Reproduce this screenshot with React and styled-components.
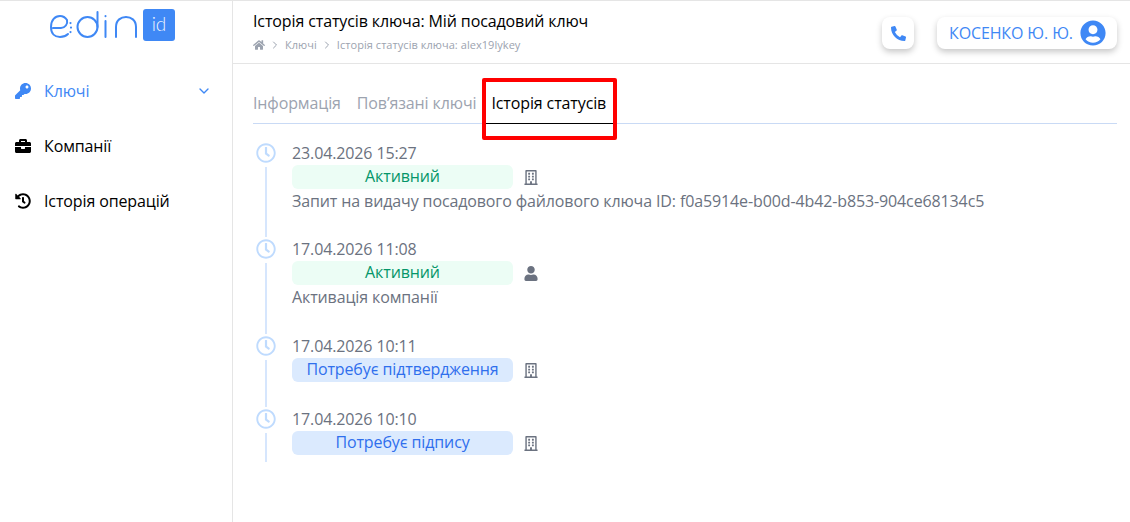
import styled, { createGlobalStyle } from "styled-components"
import {
  FaKey,
  FaBriefcase,
  FaHistory,
  FaHome,
  FaPhoneAlt,
  FaUserCircle,
  FaRegClock,
  FaRegBuilding,
  FaUser,
} from "react-icons/fa"
import { FiChevronDown, FiChevronRight } from "react-icons/fi"

const GlobalStyle = createGlobalStyle`
  html, body {
    margin: 0;
    padding: 0;
    background: #fff;
  }
  body {
    font-family: "Open Sans", "Noto Sans", sans-serif;
    font-size: 16px;
    letter-spacing: -0.12px;
    color: #000;
  }
  * {
    box-sizing: border-box;
  }
`

const Page = styled.div`
  position: relative;
  display: grid;
  grid-template-columns: 233px 1fr;
  width: 1130px;
  height: 522px;
  overflow: hidden;
  border-top: 1px solid #e5e5e5;
`

const Sidebar = styled.aside`
  border-right: 1px solid #e5e5e5;
  display: flex;
  flex-direction: column;
`

const LogoRow = styled.div`
  display: flex;
  align-items: flex-start;
  padding: 8px 0 0 50px;
  height: 62px;
`

const LogoBox = styled.div`
  width: 32px;
  height: 32px;
  border-radius: 3px;
  background: #3f88f5;
  color: #eef4fe;
  font-family: Lato, sans-serif;
  font-size: 19px;
  font-weight: 300;
  line-height: 30px;
  text-align: center;
`

const Nav = styled.nav`
  display: flex;
  flex-direction: column;
`

const NavItem = styled.div`
  display: flex;
  align-items: center;
  height: 55px;
  padding: 0 20px 0 15px;
  color: ${(p) => (p.$active ? "#3f88f5" : "#000")};
  font-size: 16px;

  span {
    flex: 1;
    margin-left: 13px;
  }
`

const NavIcon = styled.div`
  width: 16px;
  display: flex;
  justify-content: center;
  font-size: 16px;
  color: ${(p) => (p.$active ? "#3f88f5" : "#000")};
`

const Main = styled.main`
  display: flex;
  flex-direction: column;
`

const Header = styled.header`
  height: 63px;
  border-bottom: 1px solid #e5e5e5;
  display: flex;
  align-items: flex-start;
  justify-content: space-between;
  padding: 0 13px 0 20px;
`

const Heading = styled.div`
  padding-top: 9px;
`

const Title = styled.div`
  font-size: 16px;
  line-height: 22px;
`

const Crumbs = styled.div`
  display: flex;
  align-items: center;
  gap: 4px;
  margin-top: 5px;
  font-size: 11px;
  letter-spacing: 0.05px;
  line-height: 16px;
  color: #9ca3af;
`

const HeaderActions = styled.div`
  display: flex;
  gap: 23px;
  padding-top: 16px;
`

const Raised = styled.div`
  display: flex;
  align-items: center;
  height: 32px;
  border-radius: 8px;
  background: #fff;
  color: #3f88f5;
  box-shadow: 0 3px 6px rgba(0, 0, 0, 0.22);
`

const CallButton = styled(Raised)`
  width: 32px;
  justify-content: center;
  font-size: 15px;
`

const UserButton = styled(Raised)`
  width: 180px;
  padding: 0 11px 0 12px;
  justify-content: space-between;
  font-size: 16px;

  svg {
    font-size: 26px;
  }
`

const Content = styled.div`
  padding: 0 13px 0 20px;
`

const Tabs = styled.div`
  display: flex;
  gap: 16px;
  height: 60px;
  border-bottom: 1px solid #c9daf5;
`

const Tab = styled.div`
  height: 60px;
  padding-top: 27px;
  line-height: 24px;
  font-size: 16px;
  color: #9ca3af;
`

const ActiveTab = styled(Tab)`
  color: #000;
  margin-left: -9px;
  padding-left: 8px;
  padding-right: 8px;
  border-bottom: 1px solid #000;
`

const Timeline = styled.div`
  padding-top: 17px;
`

const Entry = styled.div`
  display: grid;
  grid-template-columns: 26px 1fr;
  column-gap: 13px;
  height: ${(p) => p.$height}px;
`

const Marker = styled.div`
  display: flex;
  flex-direction: column;
  align-items: center;
  font-size: 20px;
  color: #bfdbfe;

  &::after {
    content: "";
    width: 2px;
    flex: 1;
    margin-top: 4px;
    background: #d6e6fd;
  }
`

const ClockBox = styled.div`
  height: 20px;
  margin-top: 2px;
  line-height: 0;
`

const Body = styled.div`
  color: #6b7280;
  font-size: 16px;
  line-height: 24px;
`

const StatusRow = styled.div`
  display: flex;
  align-items: center;
  gap: 11px;
`

const Badge = styled.div`
  width: 221px;
  height: 24px;
  border-radius: 6px;
  line-height: 23px;
  text-align: center;
  background: ${(p) => (p.$kind === "ok" ? "#ecfdf5" : "#dbeafe")};
  color: ${(p) => (p.$kind === "ok" ? "#059669" : "#2f6fed")};
`

const Actor = styled.div`
  width: 14px;
  display: flex;
  justify-content: center;
  font-size: 15px;
  color: #6b7280;
`

const RedFrame = styled.div`
  position: absolute;
  left: 482px;
  top: 77px;
  width: 135px;
  height: 62px;
  border: 4px solid #f00;
  border-radius: 2px;
  pointer-events: none;
`

const entries = [
  {
    date: "23.04.2026 15:27",
    status: "Активний",
    kind: "ok",
    actor: "org",
    note: "Запит на видачу посадового файлового ключа ID: f0a5914e-b00d-4b42-b853-904ce68134c5",
    height: 96,
  },
  {
    date: "17.04.2026 11:08",
    status: "Активний",
    kind: "ok",
    actor: "user",
    note: "Активація компанії",
    height: 97,
  },
  {
    date: "17.04.2026 10:11",
    status: "Потребує підтвердження",
    kind: "pending",
    actor: "org",
    height: 73,
  },
  {
    date: "17.04.2026 10:10",
    status: "Потребує підпису",
    kind: "pending",
    actor: "org",
    height: 55,
  },
]

function EdinLogo() {
  return (
    <svg width="93" height="32" viewBox="0 0 93 32" fill="none" stroke="#3f88f5" strokeWidth="2" strokeLinecap="round">
      <path d="M3 19 H11 C15 19 18 15 17 11 C15 8 12 7 10 7 C5 7 1 11 1 18 C1 25 5 28 10 28 C13 28 16 27 18 25" />
      <path d="M20.5 14 v0.1 M21 18.5 v0.1 M20.5 23 v0.1" strokeWidth="2.2" />
      <circle cx="37.5" cy="18" r="10" />
      <path d="M47.5 3 V18" />
      <path d="M55.5 12 V28 M55.5 7 v0.3" />
      <path d="M66 28 V18 C66 11 71 8 76 8 C81 8 86 11 86 18 V28" />
    </svg>
  )
}

export default function App() {
  return (
    <>
      <GlobalStyle />
      <Page>
        <Sidebar>
          <LogoRow>
            <EdinLogo />
            <LogoBox>id</LogoBox>
          </LogoRow>
          <Nav>
            <NavItem $active>
              <NavIcon $active>
                <FaKey />
              </NavIcon>
              <span>Ключі</span>
              <FiChevronDown />
            </NavItem>
            <NavItem>
              <NavIcon>
                <FaBriefcase />
              </NavIcon>
              <span>Компанії</span>
            </NavItem>
            <NavItem>
              <NavIcon>
                <FaHistory />
              </NavIcon>
              <span>Історія операцій</span>
            </NavItem>
          </Nav>
        </Sidebar>
        <Main>
          <Header>
            <Heading>
              <Title>Історія статусів ключа: Мій посадовий ключ</Title>
              <Crumbs>
                <FaHome size={12} />
                <FiChevronRight size={12} />
                Ключі
                <FiChevronRight size={12} />
                Історія статусів ключа: alex19lykey
              </Crumbs>
            </Heading>
            <HeaderActions>
              <CallButton>
                <FaPhoneAlt />
              </CallButton>
              <UserButton>
                КОСЕНКО Ю. Ю.
                <FaUserCircle />
              </UserButton>
            </HeaderActions>
          </Header>
          <Content>
            <Tabs>
              <Tab>Інформація</Tab>
              <Tab>Пов’язані ключі</Tab>
              <ActiveTab>Історія статусів</ActiveTab>
            </Tabs>
            <Timeline>
              {entries.map((entry) => (
                <Entry key={entry.date} $height={entry.height}>
                  <Marker>
                    <ClockBox>
                      <FaRegClock />
                    </ClockBox>
                  </Marker>
                  <Body>
                    <div>{entry.date}</div>
                    <StatusRow>
                      <Badge $kind={entry.kind}>{entry.status}</Badge>
                      <Actor>{entry.actor === "org" ? <FaRegBuilding /> : <FaUser />}</Actor>
                    </StatusRow>
                    {entry.note && <div>{entry.note}</div>}
                  </Body>
                </Entry>
              ))}
            </Timeline>
          </Content>
        </Main>
        <RedFrame />
      </Page>
    </>
  )
}
